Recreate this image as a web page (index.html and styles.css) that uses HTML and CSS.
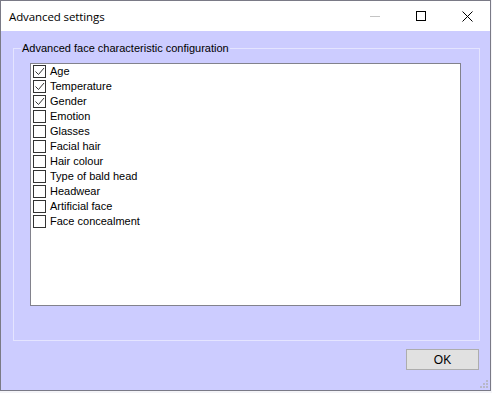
FILE: index.html
```html
<!DOCTYPE html>
<html lang="en">
<head>
    <meta charset="UTF-8">
    <title>Advanced settings</title>
    <link rel="stylesheet" href="styles.css">
</head>
<body>
    <div class="window">
        <div class="titlebar">
            <span class="title">Advanced settings</span>
            <div class="caption-buttons">
                <span class="cap-btn disabled">
                    <svg width="10" height="10" viewBox="0 0 10 10"><path d="M0 5.5h10" stroke="#c4c4c4" stroke-width="1"/></svg>
                </span>
                <span class="cap-btn">
                    <svg width="10" height="10" viewBox="0 0 10 10"><rect x="0.5" y="0.5" width="9" height="9" fill="none" stroke="#000" stroke-width="1"/></svg>
                </span>
                <span class="cap-btn">
                    <svg width="11" height="11" viewBox="0 0 11 11"><path d="M0.5 0.5l10 10M10.5 0.5l-10 10" stroke="#000" stroke-width="1"/></svg>
                </span>
            </div>
        </div>
        <div class="client">
            <fieldset class="group">
                <legend>Advanced face characteristic configuration</legend>
                <div class="list">
                    <label class="item"><span class="box checked"><svg width="11" height="11" viewBox="0 0 11 11"><path d="M1.5 5.5l3 3 5.5-6.5" fill="none" stroke="#333" stroke-width="1"/></svg></span>Age</label>
                    <label class="item"><span class="box checked"><svg width="11" height="11" viewBox="0 0 11 11"><path d="M1.5 5.5l3 3 5.5-6.5" fill="none" stroke="#333" stroke-width="1"/></svg></span>Temperature</label>
                    <label class="item"><span class="box checked"><svg width="11" height="11" viewBox="0 0 11 11"><path d="M1.5 5.5l3 3 5.5-6.5" fill="none" stroke="#333" stroke-width="1"/></svg></span>Gender</label>
                    <label class="item"><span class="box"></span>Emotion</label>
                    <label class="item"><span class="box"></span>Glasses</label>
                    <label class="item"><span class="box"></span>Facial hair</label>
                    <label class="item"><span class="box"></span>Hair colour</label>
                    <label class="item"><span class="box"></span>Type of bald head</label>
                    <label class="item"><span class="box"></span>Headwear</label>
                    <label class="item"><span class="box"></span>Artificial face</label>
                    <label class="item"><span class="box"></span>Face concealment</label>
                </div>
            </fieldset>
            <div class="actions">
                <button class="ok">OK</button>
            </div>
            <div class="grip">
                <svg width="10" height="10" viewBox="0 0 10 10">
                    <rect x="7" y="1" width="2" height="2" fill="#b8b8c8"/>
                    <rect x="4" y="4" width="2" height="2" fill="#b8b8c8"/>
                    <rect x="7" y="4" width="2" height="2" fill="#b8b8c8"/>
                    <rect x="1" y="7" width="2" height="2" fill="#b8b8c8"/>
                    <rect x="4" y="7" width="2" height="2" fill="#b8b8c8"/>
                    <rect x="7" y="7" width="2" height="2" fill="#b8b8c8"/>
                </svg>
            </div>
        </div>
    </div>
</body>
</html>
```

FILE: styles.css
```css
body {
    margin: 0;
    background-color: #f4f4f8;
    font-family: 'Liberation Sans', Arial, sans-serif;
    font-size: 11px;
    color: #000;
}

.window {
    width: 489px;
    height: 389px;
    border: 1px solid #7a7a86;
    display: flex;
    flex-direction: column;
}

.titlebar {
    height: 30px;
    background-color: #fff;
    display: flex;
    align-items: center;
    justify-content: space-between;
}

.title {
    padding-left: 8px;
    font-family: 'Open Sans', sans-serif;
    font-size: 11.5px;
    letter-spacing: -0.1px;
    color: #000;
}

.caption-buttons {
    display: flex;
    height: 30px;
}

.cap-btn {
    width: 46px;
    display: flex;
    align-items: center;
    justify-content: center;
}

.client {
    position: relative;
    flex: 1;
    background-color: #ccccff;
    padding-top: 10px;
}

.group {
    margin: 0 0 0 12px;
    padding: 8px 18px 34px 0;
    width: 447px;
    border: 1px solid #e4e4ff;
    min-width: 0;
}

.group legend {
    padding: 0 1px;
    margin-left: 7px;
    line-height: 14px;
}

.list {
    margin-left: 16px;
    border: 1px solid #82828c;
    background-color: #fff;
    padding-left: 2px;
    box-sizing: border-box;
    width: 431px;
    height: 243px;
}

.item {
    display: flex;
    align-items: flex-start;
    height: 15px;
    line-height: 14px;
    gap: 4px;
}

.box {
    margin-top: 1px;
    width: 11px;
    height: 11px;
    border: 1px solid #333;
    background-color: #fff;
    display: flex;
}

.actions {
    display: flex;
    justify-content: flex-end;
    padding: 8px 11px 0 0;
}

.ok {
    width: 73px;
    height: 21px;
    border: 1px solid #adadad;
    background-color: #e1e1e1;
    font-family: 'Liberation Sans', Arial, sans-serif;
    font-size: 12px;
    color: #000;
    padding: 0;
}

.grip {
    position: absolute;
    right: 1px;
    bottom: 1px;
    line-height: 0;
}
```
